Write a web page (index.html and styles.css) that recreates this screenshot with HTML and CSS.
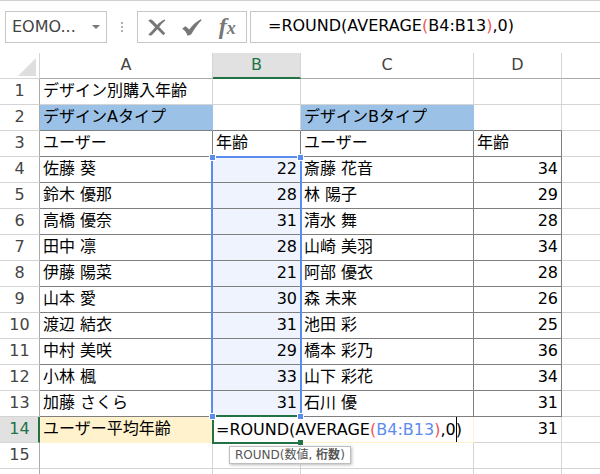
FILE: index.html
```html
<!DOCTYPE html>
<html lang="ja">
<head>
<meta charset="utf-8">
<title>デザイン別購入年齢</title>
<link rel="stylesheet" href="styles.css">
</head>
<body>
<header class="toolbar">
  <div class="namebox">
    <select class="namebox-select" aria-label="名前ボックス"><option>EOMO...</option></select>
    <svg class="namebox-arrow" width="8" height="4" viewBox="0 0 8 4" aria-hidden="true"><path d="M0 0h8L4 4z"/></svg>
  </div>
  <svg class="grip" width="2" height="10" viewBox="0 0 2 10" aria-hidden="true"><path d="M0 0h2v2H0zM0 4h2v2H0zM0 8h2v2H0z"/></svg>
  <div class="actions">
    <button class="action" type="button" aria-label="キャンセル">
      <svg width="18" height="17" viewBox="0 0 18 17"><path d="M.3 1.800C1.500.3 3.400.2 4.800 1.600L9.100 5.900C11 4 13.600 1.800 16.800.6L17.400 1.500C14.900 3.300 12.900 5.400 11.200 8L17.200 14.300 15.300 16.200 9.300 10.300C7.300 12.600 5.300 14.700 3.600 16.300 2.500 16.900 1 16.500.4 15.500 2.800 13.400 5.100 10.900 7.100 8.200L3.100 4.300C2.300 3.300 1.500 2.600.3 1.800z"/></svg>
    </button>
    <button class="action" type="button" aria-label="入力">
      <svg width="20" height="17" viewBox="0 0 20 17"><path d="M.2 9.800 3.300 7.300C4.900 8.100 6.200 9.200 7.200 10.500 10.300 6.200 14.400 2.400 18.800.2L19.700.9C15.700 5.200 12 10.200 9.100 15.400L5.600 16.800C4.500 13.700 2.600 11.200.2 9.800z"/></svg>
    </button>
    <button class="action" type="button" aria-label="関数の挿入"><span class="fx">f<span class="fx-x">x</span></span></button>
  </div>
  <div class="formula" role="textbox" contenteditable="true" spellcheck="false" aria-label="数式バー">=ROUND(AVERAGE<span class="paren">(</span>B4:B13<span class="paren">)</span>,0)</div>
</header>
<main>
<table class="sheet">
  <colgroup><col class="c-head"><col class="c-name"><col class="c-age"><col class="c-name"><col class="c-age"><col></colgroup>
  <thead>
    <tr><th class="corner"><svg width="18" height="18" viewBox="0 0 18 18" aria-hidden="true"><path d="M18 0v18H0z"/></svg></th><th>A</th><th class="active">B</th><th>C</th><th>D</th><th></th></tr>
  </thead>
  <tbody>
    <tr><th>1</th><td>デザイン別購入年齢</td><td></td><td></td><td></td><td></td></tr>
    <tr class="titles"><th>2</th><td class="blue">デザインAタイプ</td><td></td><td class="blue">デザインBタイプ</td><td></td><td></td></tr>
    <tr class="data"><th>3</th><td>ユーザー</td><td>年齢</td><td>ユーザー</td><td>年齢</td><td></td></tr>
    <tr class="data"><th>4</th><td>佐藤 葵</td><td class="num ref anchor">22<div class="range"><i class="handle tl"></i><i class="handle tr"></i><i class="handle bl"></i><i class="handle br"></i></div></td><td>斎藤 花音</td><td class="num">34</td><td></td></tr>
    <tr class="data"><th>5</th><td>鈴木 優那</td><td class="num ref">28</td><td>林 陽子</td><td class="num">29</td><td></td></tr>
    <tr class="data"><th>6</th><td>高橋 優奈</td><td class="num ref">31</td><td>清水 舞</td><td class="num">28</td><td></td></tr>
    <tr class="data"><th>7</th><td>田中 凛</td><td class="num ref">28</td><td>山崎 美羽</td><td class="num">34</td><td></td></tr>
    <tr class="data"><th>8</th><td>伊藤 陽菜</td><td class="num ref">21</td><td>阿部 優衣</td><td class="num">28</td><td></td></tr>
    <tr class="data"><th>9</th><td>山本 愛</td><td class="num ref">30</td><td>森 未来</td><td class="num">26</td><td></td></tr>
    <tr class="data"><th>10</th><td>渡辺 結衣</td><td class="num ref">31</td><td>池田 彩</td><td class="num">25</td><td></td></tr>
    <tr class="data"><th>11</th><td>中村 美咲</td><td class="num ref">29</td><td>橋本 彩乃</td><td class="num">36</td><td></td></tr>
    <tr class="data"><th>12</th><td>小林 楓</td><td class="num ref">33</td><td>山下 彩花</td><td class="num">34</td><td></td></tr>
    <tr class="data"><th>13</th><td>加藤 さくら</td><td class="num ref">31</td><td>石川 優</td><td class="num">31</td><td></td></tr>
    <tr class="average"><th class="active">14</th><td class="cream">ユーザー平均年齢</td><td class="editing"><div class="editor" role="textbox" contenteditable="true" spellcheck="false" aria-label="B14">=ROUND(AVERAGE<span class="paren">(</span><span class="cellref">B4:B13</span><span class="paren">)</span>,0<span class="caret"></span>)</div><div class="outline"><i class="fill-handle"></i></div><div class="tip" role="tooltip">ROUND(数値, <b>桁数</b>)</div></td><td class="cream-edge"></td><td class="num">31</td><td></td></tr>
    <tr class="last"><th>15</th><td></td><td></td><td></td><td></td><td></td></tr>
    <tr><th></th><td></td><td></td><td></td><td></td><td></td></tr>
  </tbody>
</table>
</main>
</body>
</html>
```
FILE: styles.css
```css
* { box-sizing: border-box; }

html, body { height: 100%; }

body {
  margin: 0;
  overflow: hidden;
  background: #fff;
  color: #000;
  font: 16px/24px "DejaVu Sans", "Noto Sans CJK JP", sans-serif;
}

.toolbar {
  display: flex;
  align-items: center;
  height: 53px;
  padding: 0 0 0 5px;
  border-top: 1px solid #d0d0d0;
}

.namebox,
.actions,
.formula {
  height: 32px;
  border: 1px solid #c6c6c6;
  background: #fff;
}

.namebox {
  position: relative;
  width: 102px;
}

.namebox-select {
  width: 100%;
  height: 100%;
  padding: 0 0 1px 6px;
  border: 0;
  background: none;
  appearance: none;
  color: #444;
  font: inherit;
}

.namebox-arrow {
  position: absolute;
  top: 13px;
  right: 6px;
  fill: #777;
  pointer-events: none;
}

.grip {
  margin: 0 14px;
  fill: #b0b0b0;
}

.actions {
  display: flex;
  align-items: center;
  width: 110px;
  padding: 0 1px;
}

.action {
  display: flex;
  flex: 1;
  align-items: center;
  justify-content: center;
  height: 30px;
  padding: 0;
  border: 0;
  background: none;
  color: #777;
  fill: #777;
}

.fx {
  font: italic bold 24px/28px "Liberation Serif", serif;
}

.fx-x { font-size: 18px; }

.formula {
  flex: 1;
  margin-left: 3px;
  padding: 1px 0 0 17px;
  border-right: 0;
  line-height: 26px;
  white-space: nowrap;
}

.paren { color: #f0555a; }
.cellref { color: #5b8def; }

.sheet {
  width: 100%;
  table-layout: fixed;
  border-collapse: separate;
  border-spacing: 0;
}

.c-head { width: 40px; }
.c-name { width: 173px; }
.c-age { width: 88px; }

.sheet th,
.sheet td {
  height: 26px;
  padding: 1px 3px 2px;
  border-right: 1px solid #d4d4d4;
  border-bottom: 1px solid #d4d4d4;
  line-height: 22px;
  text-align: left;
  white-space: nowrap;
}

.sheet th {
  color: #444;
  font-weight: 400;
  text-align: center;
}

.sheet thead th { border-bottom-color: #ababab; }
.sheet tbody th { border-right-color: #ababab; }

.sheet tr > :last-child { border-right: 0; }

.sheet thead th.corner {
  padding: 3px 3px 0 0;
  border-bottom-color: #d4d4d4;
  line-height: 0;
  text-align: right;
}

.corner svg { fill: #dedede; }

.sheet th.active {
  background: #e1e1e1;
  color: #217346;
}

.sheet thead th.active {
  padding-bottom: 1px;
  border-bottom: 2px solid #217346;
}

.sheet tbody th.active {
  padding-right: 2px;
  border-right: 2px solid #217346;
}

.sheet td.blue { background: #9bc2e6; border-right-color: #9bc2e6; }

.titles td:nth-child(-n+5),
.data td:nth-child(-n+5) { border-bottom-color: #7f7f7f; }

.data td:nth-child(-n+5) { border-right-color: #7f7f7f; }

.sheet td.num { text-align: right; }

.sheet td.ref { background: #eef3fe; }

.anchor,
.editing { position: relative; }

.range {
  position: absolute;
  z-index: 2;
  top: -1px;
  left: -2px;
  right: -2px;
  height: calc(1000% + 10px);
  border: 2px solid #5b8def;
  border-bottom: 0;
}

.handle {
  position: absolute;
  width: 5px;
  height: 5px;
  background: #5b8def;
  outline: 1px solid #fff;
}

.tl { top: -3px; left: -3px; }
.tr { top: -3px; right: -3px; }
.bl { bottom: -3px; left: -3px; }
.br { bottom: -3px; right: -3px; }

.average > *,
.last > * { height: 27px; }

.sheet td.cream {
  background: #fff2cc;
  border-color: #fff2cc;
}

.sheet td.cream-edge { border-color: #fff2cc; }

.outline {
  position: absolute;
  inset: -2px -1px -2px -1px;
  z-index: 1;
  border: 2px solid #217346;
  border-right: 0;
  pointer-events: none;
}

.fill-handle {
  position: absolute;
  right: -2px;
  bottom: -3px;
  width: 5px;
  height: 5px;
  background: #217346;
}

.editor {
  position: absolute;
  z-index: 1;
  top: 0;
  left: 0;
  padding: 0 3px;
  background: #fff;
  line-height: 25px;
}

.caret {
  display: inline-block;
  width: 1px;
  height: 25px;
  margin-right: -1px;
  background: #000;
  vertical-align: top;
}

.tip {
  position: absolute;
  z-index: 3;
  top: 29px;
  left: 16px;
  padding: 0 5px;
  border: 1px solid #bebebe;
  background: #fff;
  box-shadow: 1px 1px 3px #bbb;
  color: #555;
  font-size: 12px;
  line-height: 16px;
}
```
